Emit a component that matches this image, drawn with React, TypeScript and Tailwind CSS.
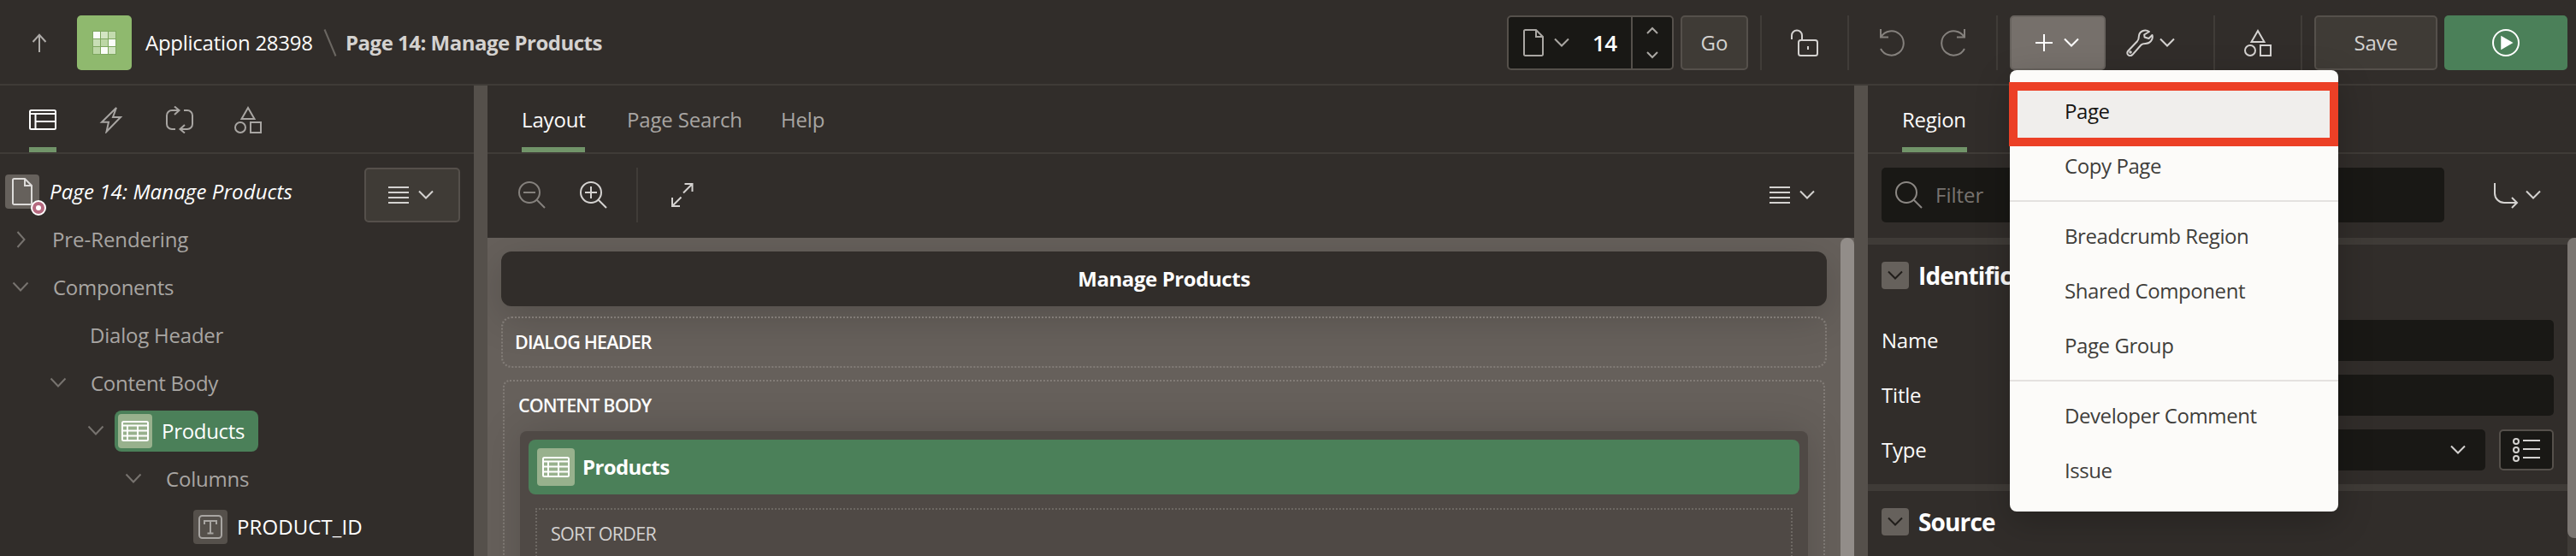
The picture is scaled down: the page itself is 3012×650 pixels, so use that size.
import type { ReactNode } from "react";

type IconProps = { className?: string };

function Svg({ w = 32, h = 32, className = "", sw = 2, children }: { w?: number; h?: number; className?: string; sw?: number; children: ReactNode }) {
  return (
    <svg width={w} height={h} viewBox={`0 0 ${w} ${h}`} fill="none" stroke="currentColor" strokeWidth={sw} className={`shrink-0 ${className}`}>
      {children}
    </svg>
  );
}

const ChevronDown = ({ className }: IconProps) => (
  <Svg w={18} h={12} className={className}><path d="M1 1.5l8 8 8-8" /></Svg>
);
const ChevronRight = ({ className }: IconProps) => (
  <Svg w={12} h={20} className={className}><path d="M1.5 1l8 9-8 9" /></Svg>
);
const TreeChevron = ({ className }: IconProps) => (
  <Svg w={20} h={14} className={className}><path d="M1.5 1.5l8.5 9 8.5-9" /></Svg>
);
const Menu = ({ className }: IconProps) => (
  <Svg w={24} h={20} className={className}><path d="M0 1h24M0 7h24M0 13h24M0 19h24" /></Svg>
);
const FileIcon = ({ className }: IconProps) => (
  <Svg w={24} h={32} className={className}><path d="M2.5 1H15l8 8v20.500a1.500 1.500 0 0 1-1.500 1.500h-19A1.500 1.500 0 0 1 1 29.500v-27A1.500 1.500 0 0 1 2.500 1zM15 1v8h8" /></Svg>
);
const Shapes = ({ className }: IconProps) => (
  <Svg className={className}><path d="M16 2L8.500 15h15zM19 19h12v12H19z" /><circle cx="7" cy="25" r="6" /></Svg>
);
const TableIcon = ({ className }: IconProps) => (
  <Svg w={32} h={24} className={className}><rect x="1" y="1" width="30" height="22" rx="1.500" /><path d="M1 5.500h30M1 11.500h30M1 17.500h30M7 5v18M19 5v18" /></Svg>
);
const SearchIcon = ({ className, sign = "" }: IconProps & { sign?: string }) => (
  <Svg className={className}><circle cx="13" cy="13" r="12" /><path d={"M21.500 21.500L31 31" + sign} /></Svg>
);
const Plus = () => <Svg w={20} h={20}><path d="M10 0v20M0 10h20" /></Svg>;
const Wrench = () => (
  <Svg>
    <path strokeLinejoin="round" d="M27 3C22 -.500 15 2.500 14.800 9c0 2.500-.300 3.500-1.800 5.200L2.300 25.500C-.800 29 4 33.300 7.500 29.800l10-11.300c1.500-1.500 3-1.500 5-1.500 5.500 0 9.500-5 8-10L26.500 11l-5-1.500-.300-3z" />
    <circle cx="5" cy="27" r=".8" />
  </Svg>
);
const Lock = () => (
  <Svg><rect x="9" y="13" width="22" height="18" rx="2.500" /><path d="M1 12V7.500a6 6 0 0 1 12 0V13M20 20v4" /></Svg>
);
const Undo = ({ className = "" }: IconProps) => (
  <Svg className={className}><path d="M3 0v9.500h9M3.500 9A14.200 14.200 0 1 1 3 23" /></Svg>
);

const Divider = ({ className = "" }: IconProps) => <div className={`h-16 w-0.5 shrink-0 bg-[#403c38] ${className}`} />;

function Header() {
  const cells = ["bg-[#fbfdf9]", "bg-[#d3e5c3]", "bg-[#c3dbae]", "bg-[#c8deb5]", "bg-[#bdd7a6]", "bg-[#fbfdf9]", "bg-[#bdd7a6]", "bg-[#fbfdf9]", "bg-[#d3e5c3]"];
  return (
    <header className="flex h-[100px] shrink-0 items-center border-b-2 border-[#3f3b37] pt-0.5 pr-2.5 pl-[37px]">
      <Svg w={18} h={22} className="text-[#aeaba8]"><path d="M9 22V2M1.500 10L9 1.800 16.500 10" /></Svg>
      <div className="ml-[35px] flex h-16 w-16 items-center justify-center rounded-[5px] bg-[#8fb96e]">
        <div className="grid h-7 w-7 grid-cols-3 gap-px bg-[#7da65f] p-px">
          {cells.map((c, i) => <div key={i} className={c} />)}
        </div>
      </div>
      <span className="ml-4 w-[208px] tracking-[-0.26px] text-[#fcfbfa]">Application 28398</span>
      <Svg w={16} h={34} className="text-[#6b6762]"><path d="M1.500 1.500l13 31" /></Svg>
      <span className="ml-2.5 font-bold tracking-[-0.5px] text-[#d4d2d0]">Page 14: Manage Products</span>

      <div className="ml-auto flex items-center">
        <div className="flex h-16 w-[195px] items-center rounded-[5px] border-2 border-[#55504b] bg-[#191815]">
          <FileIcon className="ml-[17px] text-[#aaa7a3]" />
          <ChevronDown className="ml-3 text-[#aaa7a3]" />
          <span className="ml-[27px] w-[45px] text-[26px] font-semibold tracking-[-0.5px] text-white">14</span>
          <div className="flex h-full flex-1 flex-col items-center justify-center gap-5 border-l-2 border-[#55504b] text-[#aaa7a3]">
            <Svg w={14} h={9}><path d="M1 8l6-6 6 6" /></Svg>
            <Svg w={14} h={9}><path d="M1 1l6 6 6-6" /></Svg>
          </div>
        </div>
        <button className="ml-2 h-16 w-[79px] rounded-[5px] border-2 border-[#55504b] bg-[#3f3b36] font-medium text-[#d4d2d0]">Go</button>
        <Divider className="ml-3.5" />
        <div className="mx-[34px] text-[#d4d2d0]"><Lock /></div>
        <Divider />
        <div className="mr-[34px] ml-[34px] flex gap-10 text-[#85817d]"><Undo /><Undo className="-scale-x-100" /></div>
        <Divider />
        <div className="ml-3.5 flex h-16 w-28 items-center rounded-[5px] border-2 border-[#68635e] bg-[#76706b] pl-7 text-white">
          <Plus />
          <ChevronDown className="ml-[13px]" />
        </div>
        <div className="mr-[45px] ml-6 flex items-center gap-[7px] text-[#d4d2d0]"><Wrench /><ChevronDown /></div>
        <Divider />
        <div className="mx-[34px] text-[#d4d2d0]"><Shapes /></div>
        <Divider />
        <button className="ml-3.5 h-16 w-36 rounded-[5px] border-2 border-[#55504b] bg-[#3f3b36] font-medium tracking-[-0.3px] text-[#d4d2d0]">Save</button>
        <button className="ml-2 flex h-16 w-36 items-center justify-center rounded-[5px] bg-[#4b8059] text-white">
          <Svg><circle cx="16" cy="16" r="15" /><path d="M11 9v14l12-7z" fill="currentColor" strokeWidth="1.500" /></Svg>
        </button>
      </div>
    </header>
  );
}

function Tab({ label, active = false, className = "" }: { label: string; active?: boolean; className?: string }) {
  return (
    <div className={`flex h-full items-center border-b-6 pt-2 ${active ? "border-[#719469] font-medium text-[#fcfbfa]" : "border-transparent text-[#a8a5a2]"} ${className}`}>
      <span>{label}</span>
    </div>
  );
}

const TABS = "flex h-20 shrink-0 border-b-2 border-[#3f3b37]";

function Tree() {
  const row = "flex h-14 items-center";
  return (
    <aside className="flex w-[554px] shrink-0 flex-col overflow-hidden">
      <div className={`${TABS} gap-12 pl-[34px] text-[#a8a5a2]`}>
        <div className="flex h-full w-8 items-center border-b-6 border-[#719469] pt-2 text-white">
          <Svg w={32} h={24}><rect x="1" y="1" width="30" height="22" rx="1.500" /><path d="M1 5h30M7.500 5v18M7.500 14H31" /></Svg>
        </div>
        <div className="flex items-center gap-12 pt-0.5">
          <Svg><path d="M22 2L5 18.700h8L10.500 30 27 13h-9z" /></Svg>
          <Svg><path d="M11 27H7a6 6 0 0 1-6-6V11a6 6 0 0 1 6-6h8M10 .500L15.500 5 10 10M21 5h4a6 6 0 0 1 6 6v10a6 6 0 0 1-6 6h-8M22 22l-5.500 5 5.500 4.500" /></Svg>
          <Shapes />
        </div>
      </div>
      <div className="flex h-[72px] items-start pt-4 pr-4 pl-1.5">
        <div className="relative mt-2 flex h-10 w-10 items-center justify-center rounded-[4px] bg-[#66615c] text-[#dddbd9]">
          <FileIcon />
          <div className="absolute top-[30px] left-[30px] h-[18px] w-[18px] rounded-full border-2 border-white bg-[#b5697f] p-1">
            <div className="h-full w-full rounded-full bg-white" />
          </div>
        </div>
        <span className="mt-3 ml-3 font-medium tracking-[0.1px] text-white italic">Page 14: Manage Products</span>
        <button className="ml-auto flex h-16 w-28 items-center gap-[11px] rounded-[5px] border-2 border-[#55504b] bg-[#3f3b36] pl-[26px] text-[#d4d2d0]">
          <Menu /><ChevronDown />
        </button>
      </div>
      <div className="text-[#a8a5a2]">
        <div className={`${row} pl-[19px]`}><ChevronRight className="text-[#77736f]" /><span className="ml-[30px] tracking-[-0.07px]">Pre-Rendering</span></div>
        <div className={`${row} pl-3.5`}><TreeChevron className="text-[#77736f]" /><span className="ml-7 tracking-[-0.25px]">Components</span></div>
        <div className={`${row} pl-[105px]`}><span className="tracking-[-0.22px]">Dialog Header</span></div>
        <div className={`${row} pl-[58px]`}><TreeChevron className="text-[#77736f]" /><span className="ml-7 tracking-[-0.28px]">Content Body</span></div>
        <div className={`${row} pl-[102px]`}>
          <TreeChevron className="text-[#77736f]" />
          <div className="ml-3 flex h-12 w-[168px] items-center rounded-lg bg-[#4b8059] pl-1 text-white">
            <div className="flex h-10 w-10 items-center justify-center rounded-[4px] bg-[#98b18d]"><TableIcon /></div>
            <span className="ml-[11px] font-medium tracking-[-0.3px]">Products</span>
          </div>
        </div>
        <div className={`${row} pl-[146px]`}><TreeChevron className="text-[#77736f]" /><span className="ml-7 tracking-[-0.2px]">Columns</span></div>
        <div className={`${row} pl-[226px]`}>
          <div className="flex h-10 w-10 items-center justify-center rounded-[4px] bg-[#55504b] text-[#a8a5a2]">
            <Svg w={28} h={28}><rect x="1" y="1" width="26" height="26" rx="3.500" /><path d="M7 11V7h14v4M14 7v14.500M10.500 21.500h7" /></Svg>
          </div>
          <span className="ml-[11px] font-medium tracking-[0.1px] text-white">PRODUCT_ID</span>
        </div>
      </div>
    </aside>
  );
}

function Canvas() {
  return (
    <main className="flex w-[1598px] shrink-0 flex-col overflow-hidden">
      <div className={`${TABS} gap-[49px] pl-10 tracking-[-0.15px]`}>
        <Tab label="Layout" active className="w-[74px]" />
        <Tab label="Page Search" className="w-[131px]" />
        <Tab label="Help" />
      </div>
      <div className="flex h-[98px] shrink-0 items-center pr-[46px] pb-[2px] pl-9">
        <SearchIcon className="text-[#85817d]" sign="M6 13h14" />
        <SearchIcon className="ml-10 text-[#d4d2d0]" sign="M6 13h14M13 6v14" />
        <Divider className="ml-[34px]" />
        <Svg className="ml-9 text-[#d4d2d0]"><path d="M17 13.500L27.500 3M18.500 3H27.500v9M14.500 18.500L4 29M4 19V29h9" /></Svg>
        <Menu className="ml-auto text-[#d4d2d0]" />
        <ChevronDown className="ml-[11px] text-[#d4d2d0]" />
      </div>
      <div className="flex flex-1 bg-[#66605b]">
        <div className="flex w-[1582px] flex-col overflow-hidden px-4 pt-4">
          <div className="flex h-16 shrink-0 items-center justify-center rounded-xl bg-[#312d2a] font-bold tracking-[-0.42px] text-white shadow-[0_12px_48px_rgba(0,0,0,0.18)]">Manage Products</div>
          <div className="mt-3 flex h-[60px] shrink-0 items-center rounded-xl border-2 border-dotted border-[#827c77] pl-3.5 text-[21.5px] font-semibold tracking-[-0.8px] text-white">
            <span>DIALOG HEADER</span>
          </div>
          <div className="mx-0.5 mt-3.5 flex h-[270px] shrink-0 flex-col rounded-lg border-2 border-dotted border-[#827c77] px-[18px]">
            <span className="mt-[13px] -ml-0.5 h-[45px] shrink-0 text-[21.5px] leading-[30px] font-semibold tracking-[-0.85px] text-white">CONTENT BODY</span>
            <div className="flex-1 rounded-t-lg bg-[#4f4945] px-2.5 pt-2.5 shadow-[0_0_48px_rgba(0,0,0,0.16)]">
              <div className="flex h-16 items-center rounded-lg bg-[#4b8059] pl-2.5 font-bold tracking-[-0.6px] text-white">
                <div className="flex h-11 w-11 items-center justify-center rounded-[4px] bg-[#98b18d]"><TableIcon /></div>
                <span className="ml-[9px]">Products</span>
              </div>
              <div className="mx-2 mt-4 h-28 border-2 border-dotted border-[#6d6863] pt-3 pl-4 text-[21.5px] leading-[32px] tracking-[-0.7px] text-[#d4d2d0]">SORT ORDER</div>
            </div>
          </div>
        </div>
        <div className="w-4 rounded-t-lg bg-[#928d89]" />
      </div>
    </main>
  );
}

function SectionTitle({ label }: { label: string }) {
  return (
    <div className="flex h-[72px] items-center">
      <div className="flex h-8 w-8 items-center justify-center rounded-[4px] bg-[#66615c] text-[#201d1a]"><ChevronDown /></div>
      <span className="ml-[11px] text-[28px] font-bold tracking-[-0.85px] text-white">{label}</span>
    </div>
  );
}

function Properties() {
  const label = "w-[296px] font-medium tracking-[-0.2px] text-[#fcfbfa]";
  return (
    <aside className="flex flex-1 flex-col overflow-hidden">
      <div className={`${TABS} pl-10 tracking-[-0.3px]`}>
        <Tab label="Region" active className="w-[76px]" />
      </div>
      <div className="flex h-[98px] shrink-0 items-center pr-[41px] pb-0.5 pl-4">
        <div className="flex h-16 w-[658px] items-center rounded-[5px] bg-[#191815] pl-4">
          <SearchIcon className="text-[#8b8783]" />
          <span className="ml-[15px] text-[#77736f]">Filter</span>
        </div>
        <Svg className="ml-auto text-[#d4d2d0]"><path d="M3 2v12a11 11 0 0 0 11 11h15M23 19l6 6-6 6" /></Svg>
        <ChevronDown className="ml-[7px] text-[#d4d2d0]" />
      </div>
      <div className="flex flex-1">
        <div className="flex w-[818px] flex-col">
          <div className="h-[288px] border-t-8 border-[#3f3b37] px-4">
            <SectionTitle label="Identification" />
            <div className="mt-2 flex h-16 items-center"><span className={label}>Name</span><div className="h-12 flex-1 rounded-[5px] bg-[#191815]" /></div>
            <div className="flex h-16 items-center"><span className={label}>Title</span><div className="h-12 flex-1 rounded-[5px] bg-[#191815]" /></div>
            <div className="flex h-16 items-center">
              <span className={label}>Type</span>
              <div className="flex h-12 flex-1 items-center justify-end rounded-[5px] bg-[#191815] pr-[23px] text-[#d4d2d0]"><ChevronDown /></div>
              <div className="ml-4 flex h-12 w-16 items-center justify-center rounded-[5px] border-2 border-[#55504b] bg-[#191815] text-[#d4d2d0]">
                <Svg><circle cx="4" cy="6" r="3" /><circle cx="4" cy="16" r="3" /><circle cx="4" cy="26" r="3" /><path d="M12 5h20M12 15h20M12 25h20" /></Svg>
              </div>
            </div>
          </div>
          <div className="border-t-8 border-[#3f3b37] px-4"><SectionTitle label="Source" /></div>
        </div>
        <div className="w-2.5 bg-[#3f3b37]"><div className="h-[351px] rounded-l-lg bg-[#7b7672]" /></div>
      </div>
    </aside>
  );
}

function CreateMenu() {
  const item = "flex h-16 items-center pl-16";
  return (
    <div className="absolute top-[82px] left-[2350px] h-[516px] w-[384px] rounded-lg bg-[#fcfbf9] py-4 tracking-[-0.42px] text-[#403e3b] shadow-[0_12px_40px_rgba(0,0,0,0.22)]">
      <div className={`${item} bg-[#f0eeec] font-medium text-[#161513]`}>Page</div>
      <div className={item}>Copy Page</div>
      <div className="my-2 h-0.5 bg-[#e4e2e0]" />
      <div className={item}>Breadcrumb Region</div>
      <div className={item}>Shared Component</div>
      <div className={item}>Page Group</div>
      <div className="my-2 h-0.5 bg-[#e4e2e0]" />
      <div className={item}>Developer Comment</div>
      <div className={item}>Issue</div>
      <div className="absolute top-[14px] -left-px h-[75px] w-[385px] border-10 border-[#ec4026]" />
    </div>
  );
}

export default function App() {
  return (
    <div className="relative flex h-[650px] w-[3012px] flex-col overflow-hidden bg-[#312d2a] font-['Open_Sans','Noto_Sans',sans-serif] text-[24px] leading-8 whitespace-nowrap">
      <Header />
      <div className="flex flex-1 overflow-hidden">
        <Tree />
        <div className="w-4 shrink-0 bg-[#55504b]" />
        <Canvas />
        <div className="w-4 shrink-0 bg-[#55504b]" />
        <Properties />
      </div>
      <CreateMenu />
    </div>
  );
}
